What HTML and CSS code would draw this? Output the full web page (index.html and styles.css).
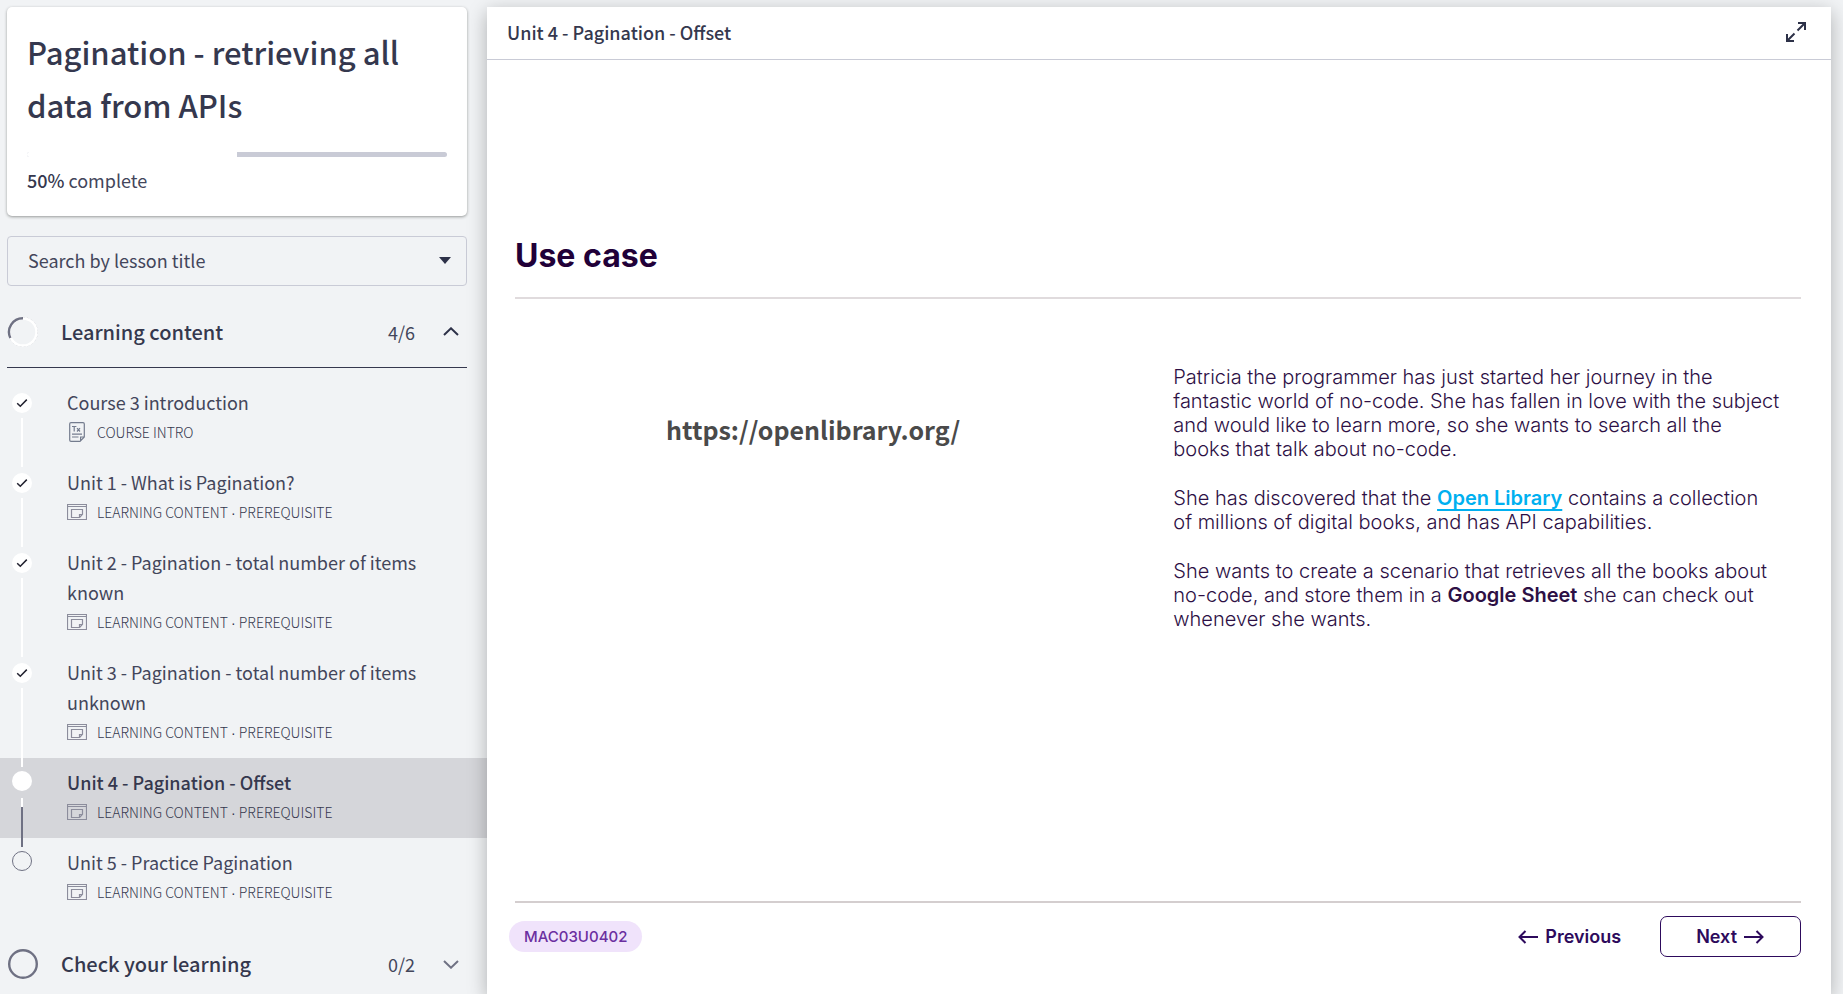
FILE: index.html
```html
<!DOCTYPE html>
<html lang="en">
<head>
<meta charset="utf-8">
<meta name="viewport" content="width=device-width, initial-scale=1">
<title>Unit 4 - Pagination - Offset</title>
<link rel="stylesheet" href="styles.css">
</head>
<body>
<svg class="sprite" aria-hidden="true">
  <symbol id="check" viewBox="0 0 12 10"><path d="M1.2 5.2 4.3 8.2 10.8 1.6" fill="none" stroke="#222230" stroke-width="1.5"/></symbol>
  <symbol id="slide" viewBox="0 0 20 16"><path d="M.5.5H19.5V15.5H.5ZM.5 2.5H19.5M4.5 5.5H15.5V10.2L12.7 13.5H4.5ZM15.5 10.5H12.5V13.5" fill="none" stroke="#8c8d9c" stroke-width="1.2"/></symbol>
  <symbol id="doc" viewBox="0 0 16 20"><path d="M2 .7H14Q15.3.7 15.3 2V15L11 19.3H2Q.7 19.3.7 18V2Q.7.7 2 .7ZM15.3 15H11.6V19.3M3 4.5H7.4M5.2 4.5V9.5M8 6.2 11 9.5M11 6.2 8 9.5M3 12.2H13M3 15H9.5" fill="none" stroke="#747c8e" stroke-width="1.2"/></symbol>
</svg>
<div class="layout">
  <aside class="sidebar">
    <section class="course">
      <h1 class="course-title">Pagination - retrieving all data from APIs</h1>
      <div class="progress"><div class="progress-done" style="width:50%"></div></div>
      <p class="progress-label"><strong>50%</strong> complete</p>
    </section>
    <div class="search">
      <select class="search-select" aria-label="Search by lesson title"><option>Search by lesson title</option></select>
      <svg class="search-caret" width="12" height="7" viewBox="0 0 12 7"><path d="M0 0H12L6 7Z" fill="#2d3148"/></svg>
    </div>
    <button class="section section-open" type="button">
      <svg class="ring" width="32" height="32" viewBox="0 0 32 32"><circle cx="16" cy="16" r="14.5" fill="none" stroke="#c9cad0" stroke-width="1" stroke-dasharray="2 2"/><circle cx="16" cy="16" r="13.5" fill="none" stroke="#fff" stroke-width="2.4"/><path d="M16 2.2A13.8 13.8 0 0 0 3.4 22" fill="none" stroke="#6f7183" stroke-width="2.4"/></svg>
      <span class="section-title">Learning content</span>
      <span class="section-count">4/6</span>
      <svg width="16" height="9" viewBox="0 0 16 9"><path d="M1 8 8 1.3 15 8" fill="none" stroke="#2d3148" stroke-width="2"/></svg>
    </button>
    <ul class="lessons">
      <li class="lesson">
        <span class="marker"><span class="dot dot-done"><svg width="12" height="10"><use href="#check"/></svg></span><span class="line"></span></span>
        <a class="lesson-link" href="#"><span class="lesson-title">Course 3 introduction</span><span class="meta"><span class="meta-icon"><svg width="16" height="20"><use href="#doc"/></svg></span>COURSE INTRO</span></a>
      </li>
      <li class="lesson">
        <span class="marker"><span class="dot dot-done"><svg width="12" height="10"><use href="#check"/></svg></span><span class="line"></span></span>
        <a class="lesson-link" href="#"><span class="lesson-title">Unit 1 - What is Pagination?</span><span class="meta"><span class="meta-icon"><svg width="20" height="16"><use href="#slide"/></svg></span><span>LEARNING CONTENT <span class="sep">·</span> PREREQUISITE</span></span></a>
      </li>
      <li class="lesson">
        <span class="marker"><span class="dot dot-done"><svg width="12" height="10"><use href="#check"/></svg></span><span class="line"></span></span>
        <a class="lesson-link" href="#"><span class="lesson-title">Unit 2 - Pagination - total number of items known</span><span class="meta"><span class="meta-icon"><svg width="20" height="16"><use href="#slide"/></svg></span><span>LEARNING CONTENT <span class="sep">·</span> PREREQUISITE</span></span></a>
      </li>
      <li class="lesson">
        <span class="marker"><span class="dot dot-done"><svg width="12" height="10"><use href="#check"/></svg></span><span class="line"></span></span>
        <a class="lesson-link" href="#"><span class="lesson-title">Unit 3 - Pagination - total number of items unknown</span><span class="meta"><span class="meta-icon"><svg width="20" height="16"><use href="#slide"/></svg></span><span>LEARNING CONTENT <span class="sep">·</span> PREREQUISITE</span></span></a>
      </li>
      <li class="lesson lesson-current">
        <span class="marker marker-open"><span class="dot dot-done"></span><span class="line line-next"></span></span>
        <a class="lesson-link" href="#" aria-current="page"><span class="lesson-title">Unit 4 - Pagination - Offset</span><span class="meta"><span class="meta-icon"><svg width="20" height="16"><use href="#slide"/></svg></span><span>LEARNING CONTENT <span class="sep">·</span> PREREQUISITE</span></span></a>
      </li>
      <li class="lesson">
        <span class="marker marker-open"><span class="dot dot-todo"></span></span>
        <a class="lesson-link" href="#"><span class="lesson-title">Unit 5 - Practice Pagination</span><span class="meta"><span class="meta-icon"><svg width="20" height="16"><use href="#slide"/></svg></span><span>LEARNING CONTENT <span class="sep">·</span> PREREQUISITE</span></span></a>
      </li>
    </ul>
    <button class="section" type="button">
      <svg class="ring" width="32" height="32" viewBox="0 0 32 32"><circle cx="16" cy="16" r="13.8" fill="none" stroke="#6f7183" stroke-width="2.4"/></svg>
      <span class="section-title">Check your learning</span>
      <span class="section-count">0/2</span>
      <svg width="16" height="9" viewBox="0 0 16 9"><path d="M1 1 8 7.7 15 1" fill="none" stroke="#6f7183" stroke-width="2"/></svg>
    </button>
  </aside>
  <main class="viewer">
    <header class="viewer-head">
      <h2 class="viewer-title">Unit 4 - Pagination - Offset</h2>
      <button class="expand" type="button" aria-label="Full screen"><svg width="20" height="20" viewBox="0 0 20 20"><path d="M12 1H19V8M19 1 11.5 8.5M8 19H1V12M1 19 8.5 11.5" fill="none" stroke="#2d3148" stroke-width="2"/></svg></button>
    </header>
    <article class="slide">
      <h3 class="slide-title">Use case</h3>
      <div class="columns">
        <p class="site">https://openlibrary.org/</p>
        <div class="story">
          <p>Patricia the programmer has just started her journey in the fantastic world of no-code. She has fallen in love with the subject and would like to learn more, so she wants to search all the books that talk about no-code.</p>
          <p>She has discovered that the <a class="story-link" href="#">Open Library</a> contains a collection of millions of digital books, and has API capabilities.</p>
          <p>She wants to create a scenario that retrieves all the books about no-code, and store them in a <strong>Google Sheet</strong> she can check out whenever she wants.</p>
        </div>
      </div>
      <footer class="slide-foot">
        <span class="code">MAC03U0402</span>
        <nav class="pager">
          <button class="prev" type="button"><svg width="20" height="14" viewBox="0 0 20 14"><path d="M20 7H1.5M7.5 1 1.5 7 7.5 13" fill="none" stroke="#2d0a5c" stroke-width="2"/></svg>Previous</button>
          <button class="next" type="button">Next<svg width="20" height="14" viewBox="0 0 20 14"><path d="M0 7H18.5M12.5 1 18.5 7 12.5 13" fill="none" stroke="#2d0a5c" stroke-width="2"/></svg></button>
        </nav>
      </footer>
    </article>
  </main>
</div>
</body>
</html>
```
FILE: styles.css
```css
* { box-sizing: border-box; margin: 0; padding: 0; }
body {
  background: #f1f3f5;
  color: #35384e;
  font-family: "Noto Sans CJK SC", "Noto Sans", sans-serif;
  font-size: 18px;
  line-height: 30px;
  overflow: hidden;
}
button { background: none; border: 0; color: inherit; font: inherit; cursor: pointer; }
svg { display: block; flex: none; }
.sprite { display: none; }
.layout { display: grid; grid-template-columns: 487px minmax(0, 1fr); height: 100vh; padding: 7px 12px 0 0; }
.sidebar { display: flex; flex-direction: column; min-height: 0; }
.sidebar > * { flex: none; }

.course { margin: 0 20px 20px 7px; padding: 18px 20px 21px; background: #fff; border-radius: 5px; box-shadow: 0 1px 3px rgba(40, 45, 40, .45); }
.course-title { font-size: 31px; line-height: 53px; font-weight: 500; }
.progress { height: 5px; margin: 21px 0 8px; border-radius: 3px; background: #c9cbd6; overflow: hidden; }
.progress-done { height: 100%; background: #fff; }
.progress-label { color: #43465b; }
.progress-label strong { color: #35384e; font-weight: 500; }

.search { position: relative; margin: 0 20px 12px 7px; }
.search-select { display: block; width: 100%; height: 50px; padding: 0 20px 3px; appearance: none; background: none; border: 1px solid #c9cbd6; border-radius: 4px; color: #43465b; font: inherit; }
.search-caret { position: absolute; right: 16px; top: 21px; pointer-events: none; }

.section { display: flex; align-items: center; height: 70px; margin: 0 20px 0 7px; padding: 0 8px 2px 0; text-align: left; }
.section-open { border-bottom: 1px solid #35384e; }
.section-title { flex: 1; padding-left: 22px; font-size: 20px; font-weight: 500; }
.section-count { padding-right: 28px; color: #43465b; }

.lessons { list-style: none; padding: 10px 0 12px; }
.lesson { display: flex; padding: 9px 60px 11px 12px; color: #43465b; }
.lesson-current { background: #d5d6da; }
.lesson-current .lesson-title { color: #35384e; font-weight: 500; }
.marker { position: relative; z-index: 1; flex: none; display: flex; flex-direction: column; align-items: center; gap: 5px; width: 20px; margin: 6px 35px -20px 0; }
.marker-open { gap: 7px; margin-top: 4px; }
.dot { display: grid; place-items: center; width: 20px; height: 20px; border-radius: 50%; }
.dot-done { background: #fff; }
.dot-todo { border: 1px solid #6f7183; }
.line { flex: 1; width: 2px; background: #fff; }
.line-next { background: linear-gradient(#fff 9px, #6f7183 9px); }
.lesson-link { color: inherit; text-decoration: none; }
.lesson-title { display: block; }
.meta { display: flex; align-items: center; color: #35384e; font-size: 14px; font-weight: 300; }
.meta-icon { display: grid; place-items: center; width: 20px; margin-right: 10px; }
.sep { font-family: "Liberation Sans", sans-serif; line-height: 1; }

.viewer { position: relative; z-index: 2; display: flex; flex-direction: column; min-height: 0; background: #fff; box-shadow: 0 5px 18px rgba(0, 0, 0, .28); }
.viewer-head { display: flex; justify-content: space-between; align-items: center; height: 53px; padding: 0 25px 2px 20px; border-bottom: 1px solid #c9cbd6; }
.viewer-title { font-size: 18px; font-weight: 500; }

.slide { flex: 1; display: flex; flex-direction: column; padding: 176px 30px 37px 28px; font-family: Inter, sans-serif; }
.slide-title { padding-bottom: 21px; border-bottom: 2px solid #e0dbdd; color: #210038; font-size: 32px; line-height: 40px; font-weight: 700; }
.columns { flex: 1; display: grid; grid-template-columns: 19fr 20fr; gap: 62px; align-items: start; padding-top: 66px; }
.site { padding-top: 44px; color: #4a4a4a; font-family: "Noto Sans CJK SC", sans-serif; font-size: 25px; line-height: 40px; font-weight: 700; text-align: center; }
.story { display: grid; gap: 25px; max-width: 608px; color: #2d1045; font-size: 20px; line-height: 24px; font-weight: 300; }
.story strong { font-weight: 600; }
.story-link { color: #00b0f0; font-weight: 600; text-decoration: underline 2px; text-underline-offset: 4px; text-decoration-skip-ink: none; }
.slide-foot { display: flex; justify-content: space-between; align-items: center; padding-top: 13px; border-top: 2px solid #d4cecf; }
.code { margin-left: -6px; padding: 0 15px; border-radius: 16px; background: #f0e3fb; color: #6b2fa0; font-size: 15px; line-height: 31px; font-weight: 500; }
.pager { display: flex; gap: 39px; color: #2d0a5c; font-size: 18px; font-weight: 600; }
.pager button { display: flex; align-items: center; gap: 7px; height: 41px; }
.pager .next { padding: 0 36px 0 35px; border: 1px solid #2d0a5c; border-radius: 7px; }
```
